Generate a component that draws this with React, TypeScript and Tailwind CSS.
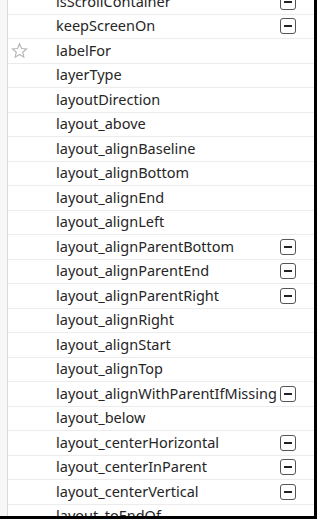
import { useState } from 'react';

type Attr = { name: string; starred?: boolean; minus?: boolean };

const ATTRS: Attr[] = [
  { name: 'isScrollContainer', minus: true },
  { name: 'keepScreenOn', minus: true },
  { name: 'labelFor', starred: true },
  { name: 'layerType' },
  { name: 'layoutDirection' },
  { name: 'layout_above' },
  { name: 'layout_alignBaseline' },
  { name: 'layout_alignBottom' },
  { name: 'layout_alignEnd' },
  { name: 'layout_alignLeft' },
  { name: 'layout_alignParentBottom', minus: true },
  { name: 'layout_alignParentEnd', minus: true },
  { name: 'layout_alignParentRight', minus: true },
  { name: 'layout_alignRight' },
  { name: 'layout_alignStart' },
  { name: 'layout_alignTop' },
  { name: 'layout_alignWithParentIfMissing', minus: true },
  { name: 'layout_below' },
  { name: 'layout_centerHorizontal', minus: true },
  { name: 'layout_centerInParent', minus: true },
  { name: 'layout_centerVertical', minus: true },
  { name: 'layout_toEndOf' },
];

function Star() {
  return (
    <svg width="17" height="17" viewBox="0 0 24 24" fill="none" stroke="#b5b5b5" strokeWidth="1.6" strokeLinejoin="miter">
      <path d="M12 2.5l2.8 6.6 7.1.6-5.4 4.7 1.6 7-6.1-3.7-6.1 3.7 1.6-7-5.4-4.7 7.1-.6z" />
    </svg>
  );
}

function MinusBox() {
  return (
    <span className="flex h-[16px] w-[16px] items-center justify-center rounded-[3px] border-[1.5px] border-[#555] bg-white">
      <span className="h-[2px] w-[8px] bg-[#222]" />
    </span>
  );
}

export default function App() {
  const [selected, setSelected] = useState<string | null>(null);
  return (
    <div className="h-[519px] w-[317px] overflow-hidden border-r-[3px] border-b-[3px] border-black bg-white" style={{ fontFamily: '"Noto Sans", "Open Sans", sans-serif' }}>
      <div className="flex h-full">
        <div className="w-[8px] shrink-0 border-r border-[#d9d9d9] bg-[#f7f7f7]" />
        <div className="-mt-[10px] min-w-0 flex-1">
          {ATTRS.map((a) => (
            <div
              key={a.name}
              onClick={() => setSelected(a.name)}
              className={
                'flex h-[24.5px] items-center border-b border-[#ececec] ' +
                (selected === a.name ? 'bg-[#e8f0fb]' : '')
              }
            >
              <div className="flex w-[48px] shrink-0 justify-start pl-[3px]">{a.starred && <Star />}</div>
              <span className="flex-1 truncate whitespace-nowrap text-[14.5px] text-[#262626]">{a.name}</span>
              <div className="flex w-[34px] shrink-0 justify-start">{a.minus && <MinusBox />}</div>
            </div>
          ))}
        </div>
      </div>
    </div>
  );
}
